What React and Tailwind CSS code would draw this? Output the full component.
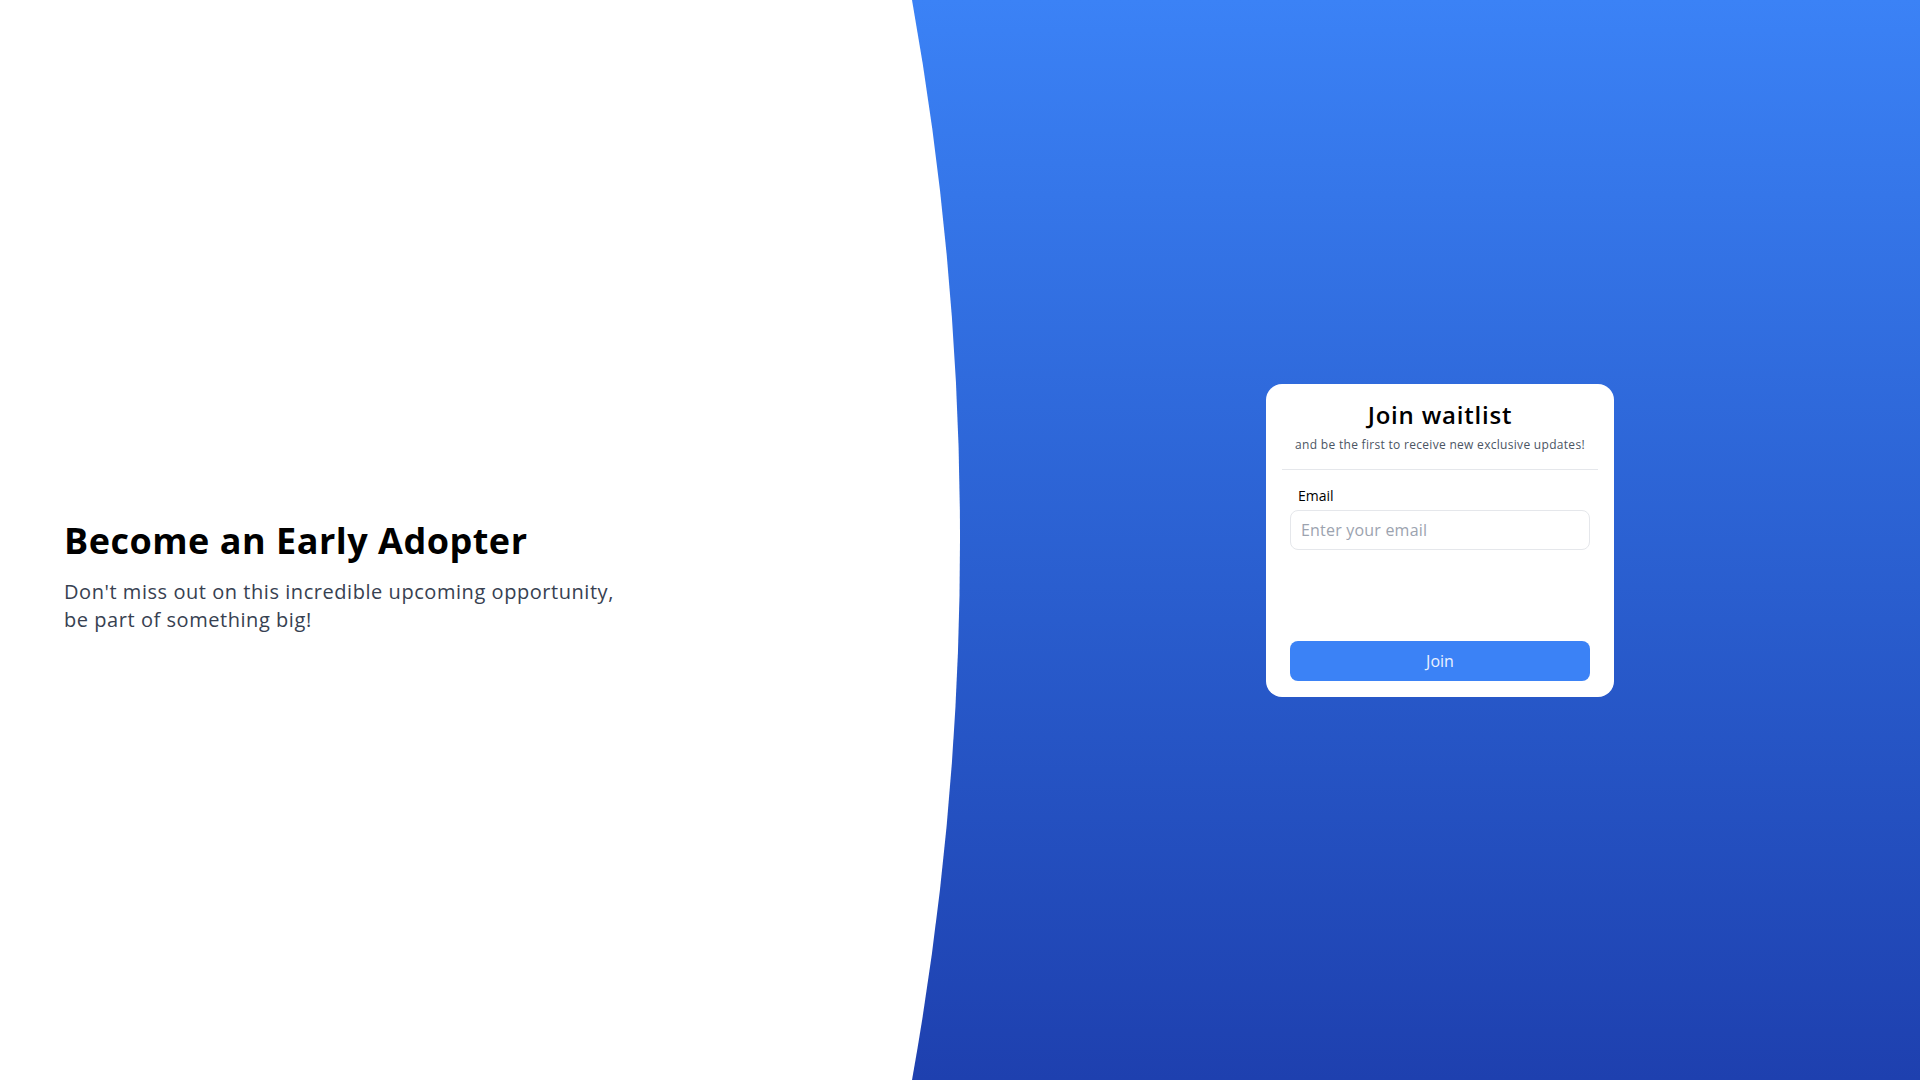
import React from 'react';

const font = { fontFamily: '"Open Sans", "Noto Sans", sans-serif' };

const WaitlistCard = () => (
    <div className="w-[348px] rounded-2xl bg-white pt-[15px] pb-4">
        <div className="text-center">
            <h2 className="text-2xl leading-8 font-semibold tracking-[0.8px] text-black">Join waitlist</h2>
            <p className="mt-1.5 text-xs leading-4 tracking-[0.3px] text-[#4b5563]">
                and be the first to receive new exclusive updates!
            </p>
        </div>
        <div className="mx-4 mt-4 h-px bg-[#e5e7eb]" />
        <form className="px-6 pt-4" onSubmit={(e) => e.preventDefault()}>
            <label className="block px-2 text-sm leading-5 text-black">Email</label>
            <input
                type="email"
                placeholder="Enter your email"
                className="mt-1 h-10 w-full rounded-lg border border-[#e5e7eb] px-2.5 text-base tracking-[0.2px] text-gray-800 placeholder:text-[#9ca3af] outline-none"
            />
            <button
                type="submit"
                className="mt-[91px] h-10 w-full rounded-lg bg-[#3b82f6] text-base text-white/90"
            >
                Join
            </button>
        </form>
    </div>
);

export default function App() {
    return (
        <div
            className="grid h-screen w-full grid-cols-2 overflow-hidden bg-gradient-to-b from-[#3b82f6] to-[#1e40af]"
            style={font}
        >
            <div className="relative flex flex-col justify-center px-16 pt-[74px]">
                <svg
                    className="absolute inset-0 h-full w-full"
                    viewBox="0 0 960 1080"
                    preserveAspectRatio="none"
                >
                    <path d="M0 0 H912 A3061.5 3061.5 0 0 1 912 1080 H0 Z" fill="#ffffff" />
                </svg>
                <div className="relative">
                    <h1 className="text-4xl leading-10 font-bold tracking-[0.5px] text-black">Become an Early Adopter</h1>
                    <p className="mt-[17px] text-xl leading-7 tracking-[0.55px] text-[#374151]">
                        Don't miss out on this incredible upcoming opportunity,
                        <br />
                        be part of something big!
                    </p>
                </div>
            </div>
            <div className="flex items-center justify-center">
                <WaitlistCard />
            </div>
        </div>
    );
}
